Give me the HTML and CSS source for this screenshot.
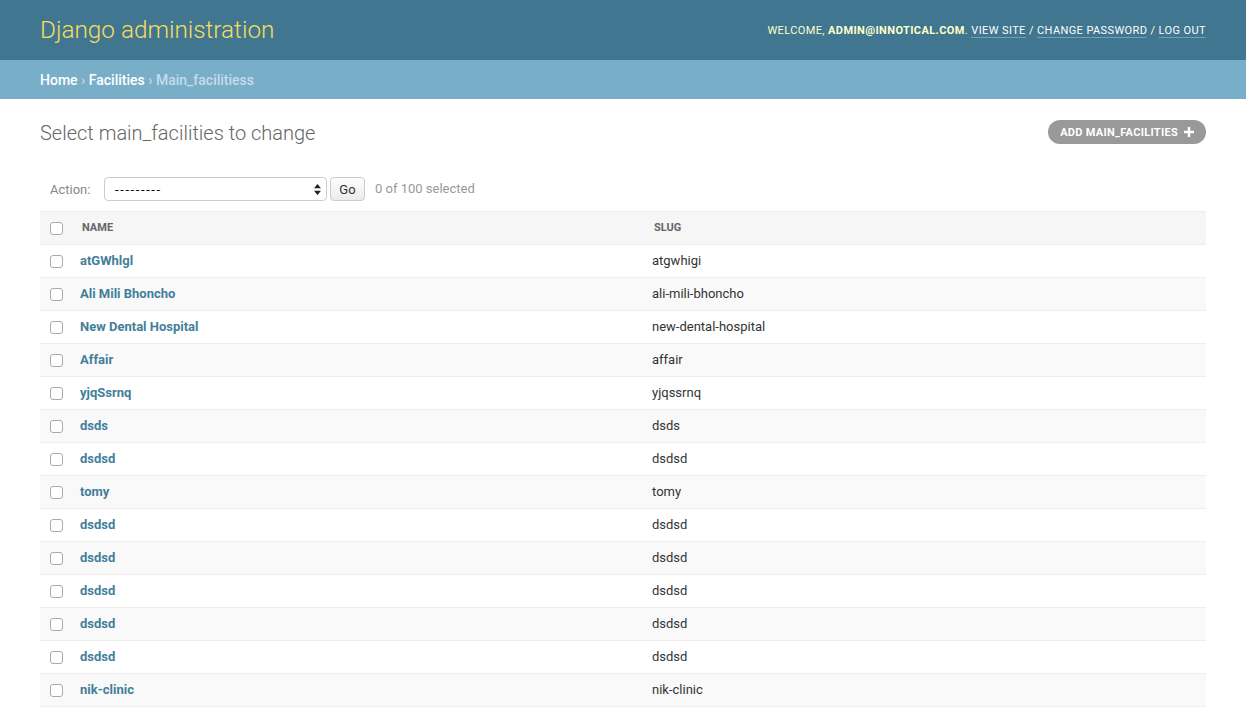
FILE: index.html
```html
<!DOCTYPE html>
<html>
<head>
<meta charset="utf-8">
<title>Select main_facilities to change</title>
<link rel="stylesheet" href="styles.css">
</head>
<body>
<div class="header">
  <h1 class="branding">Django administration</h1>
  <div class="user-tools">
    Welcome, <strong>admin@innotical.com</strong>. <a href="#">View site</a> / <a href="#">Change password</a> / <a href="#">Log out</a>
  </div>
</div>
<div class="breadcrumbs">
  <a href="#">Home</a> › <a href="#">Facilities</a> › Main_facilitiess
</div>
<div class="content">
  <div class="title-row">
    <h1 class="title">Select main_facilities to change</h1>
    <a href="#" class="addlink">Add main_facilities
      <svg class="plus" width="10" height="10" viewBox="0 0 10 10"><path d="M3.8 0h2.4v3.8H10v2.4H6.2V10H3.8V6.2H0V3.8h3.8z" fill="#fff"/></svg>
    </a>
  </div>
  <div class="actions">
    <label class="action-label">Action:</label>
    <div class="select">
      <span>---------</span>
      <svg class="arrows" width="7" height="11" viewBox="0 0 7 11"><path d="M3.5 0L7 4.2H0z M3.5 11L0 6.8h7z" fill="#222"/></svg>
    </div>
    <button class="go">Go</button>
    <span class="counter">0 of 100 selected</span>
  </div>
  <table class="result-list">
    <thead>
      <tr>
        <th class="cb-col"><span class="cb"></span></th>
        <th class="name-col">Name</th>
        <th>Slug</th>
      </tr>
    </thead>
    <tbody>
      <tr><td class="cb-col"><span class="cb"></span></td><th><a href="#">atGWhlgl</a></th><td>atgwhigi</td></tr>
      <tr class="alt"><td class="cb-col"><span class="cb"></span></td><th><a href="#">Ali Mili Bhoncho</a></th><td>ali-mili-bhoncho</td></tr>
      <tr><td class="cb-col"><span class="cb"></span></td><th><a href="#">New Dental Hospital</a></th><td>new-dental-hospital</td></tr>
      <tr class="alt"><td class="cb-col"><span class="cb"></span></td><th><a href="#">Affair</a></th><td>affair</td></tr>
      <tr><td class="cb-col"><span class="cb"></span></td><th><a href="#">yjqSsrnq</a></th><td>yjqssrnq</td></tr>
      <tr class="alt"><td class="cb-col"><span class="cb"></span></td><th><a href="#">dsds</a></th><td>dsds</td></tr>
      <tr><td class="cb-col"><span class="cb"></span></td><th><a href="#">dsdsd</a></th><td>dsdsd</td></tr>
      <tr class="alt"><td class="cb-col"><span class="cb"></span></td><th><a href="#">tomy</a></th><td>tomy</td></tr>
      <tr><td class="cb-col"><span class="cb"></span></td><th><a href="#">dsdsd</a></th><td>dsdsd</td></tr>
      <tr class="alt"><td class="cb-col"><span class="cb"></span></td><th><a href="#">dsdsd</a></th><td>dsdsd</td></tr>
      <tr><td class="cb-col"><span class="cb"></span></td><th><a href="#">dsdsd</a></th><td>dsdsd</td></tr>
      <tr class="alt"><td class="cb-col"><span class="cb"></span></td><th><a href="#">dsdsd</a></th><td>dsdsd</td></tr>
      <tr><td class="cb-col"><span class="cb"></span></td><th><a href="#">dsdsd</a></th><td>dsdsd</td></tr>
      <tr class="alt"><td class="cb-col"><span class="cb"></span></td><th><a href="#">nik-clinic</a></th><td>nik-clinic</td></tr>
    </tbody>
  </table>
</div>
</body>
</html>
```

FILE: styles.css
```css
* { box-sizing: border-box; }
html, body { margin: 0; padding: 0; }
body {
  font-family: Roboto, "Liberation Sans", Arial, sans-serif;
  font-size: 14px;
  color: #333;
  background: #fff;
}
a { text-decoration: none; }

.header {
  height: 60px;
  padding: 0 40px;
  background: #417690;
  color: #ffc;
  display: flex;
  align-items: center;
  justify-content: space-between;
}
.branding {
  margin: 0;
  font-size: 24.3px;
  font-weight: 300;
  color: #f5dd5d;
  line-height: 1;
  padding-top: 1px;
}
.user-tools {
  font-size: 11px;
  letter-spacing: 0.4px;
  text-transform: uppercase;
  line-height: 16px;
  color: #ffc;
  padding-top: 2px;
}
.user-tools strong { font-weight: 700; }
.user-tools a {
  color: #fff;
  border-bottom: 1px solid rgba(255, 255, 255, 0.3);
}

.breadcrumbs {
  height: 39px;
  padding: 0 40px;
  background: #79aec8;
  color: #c4dce8;
  font-size: 14px;
  font-weight: 500;
  display: flex;
  align-items: center;
  white-space: pre;
}
.breadcrumbs a { color: #fff; }

.content { padding: 20px 40px; }

.title-row {
  display: flex;
  justify-content: space-between;
  align-items: flex-start;
  margin-bottom: 32px;
}
.title {
  margin: 0;
  padding-top: 2px;
  font-size: 20px;
  font-weight: 300;
  color: #666;
  line-height: 24px;
}
.addlink {
  margin-top: 1px;
  height: 24px;
  padding: 0 12px;
  border-radius: 12px;
  background: #999;
  color: #fff;
  font-size: 11px;
  font-weight: 700;
  letter-spacing: 0.3px;
  text-transform: uppercase;
  display: flex;
  align-items: center;
  gap: 6px;
}

.actions {
  display: flex;
  align-items: center;
  height: 24px;
  padding-left: 10px;
  margin-bottom: 10px;
  color: #999;
  font-size: 13px;
}
.action-label { color: #888; width: 54px; }
.select {
  width: 223px;
  height: 24px;
  border: 1px solid #ccc;
  border-radius: 4px;
  background: #fff;
  display: flex;
  align-items: center;
  justify-content: space-between;
  padding: 0 5px 0 10px;
  color: #000;
  font-size: 13px;
}
.select span { letter-spacing: 1.6px; }
.go {
  margin-left: 3px;
  width: 35px;
  height: 24px;
  border: 1px solid #ccc;
  border-radius: 4px;
  background: linear-gradient(#fdfdfd, #ececec);
  font-family: Roboto, "Liberation Sans", Arial, sans-serif;
  font-size: 13px;
  color: #333;
  padding: 0;
}
.counter { margin-left: 10px; color: #999; margin-top: -2px; }

.result-list {
  width: 100%;
  border-collapse: collapse;
  table-layout: fixed;
}
.result-list th, .result-list td {
  font-size: 13px;
  line-height: 16px;
  padding: 8px;
  border-bottom: 1px solid #eee;
  text-align: left;
  vertical-align: middle;
}
.result-list thead th {
  background: #f6f6f6;
  border-top: 1px solid #eee;
  color: #666;
  font-size: 11px;
  font-weight: 700;
  text-transform: uppercase;
  padding: 8px 10px;
}
.result-list .cb-col { width: 32px; padding: 8px 0 8px 10px; }
.result-list thead th.name-col { width: 572px; }
.result-list tbody th { font-weight: 700; }
.result-list tbody th a { color: #447e9b; }
.result-list tbody td { color: #333; }
.result-list tr.alt td, .result-list tr.alt th { background: #f9f9f9; }

.cb {
  display: block;
  width: 13px;
  height: 13px;
  border: 1px solid #aaa;
  border-radius: 3px;
  background: #fff;
}
```
